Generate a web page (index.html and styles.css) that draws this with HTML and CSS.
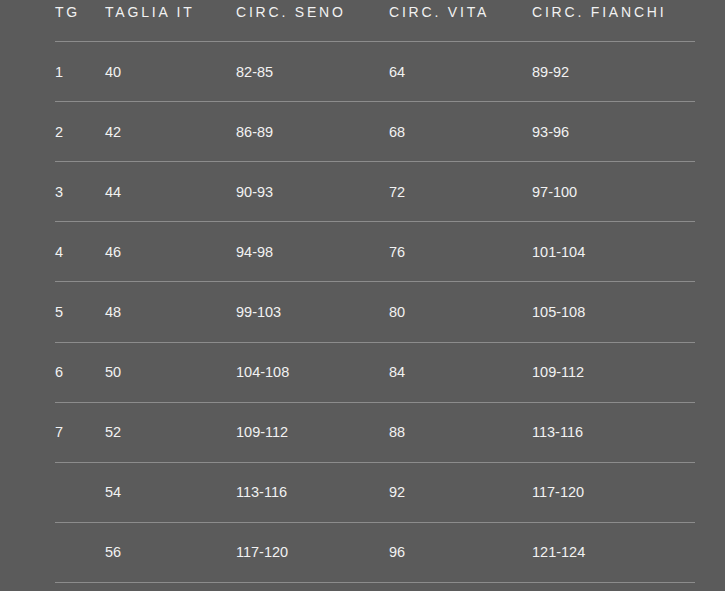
FILE: index.html
```html
<!DOCTYPE html>
<html lang="it">
<head>
<meta charset="utf-8">
<link rel="stylesheet" href="styles.css">
</head>
<body>
<table class="size-table">
  <colgroup>
    <col class="c1"><col class="c2"><col class="c3"><col class="c4"><col class="c5">
  </colgroup>
  <thead>
    <tr><th>TG</th><th>TAGLIA IT</th><th>CIRC. SENO</th><th>CIRC. VITA</th><th>CIRC. FIANCHI</th></tr>
  </thead>
  <tbody>
    <tr><td>1</td><td>40</td><td>82-85</td><td>64</td><td>89-92</td></tr>
    <tr><td>2</td><td>42</td><td>86-89</td><td>68</td><td>93-96</td></tr>
    <tr><td>3</td><td>44</td><td>90-93</td><td>72</td><td>97-100</td></tr>
    <tr><td>4</td><td>46</td><td>94-98</td><td>76</td><td>101-104</td></tr>
    <tr><td>5</td><td>48</td><td>99-103</td><td>80</td><td>105-108</td></tr>
    <tr><td>6</td><td>50</td><td>104-108</td><td>84</td><td>109-112</td></tr>
    <tr><td>7</td><td>52</td><td>109-112</td><td>88</td><td>113-116</td></tr>
    <tr><td></td><td>54</td><td>113-116</td><td>92</td><td>117-120</td></tr>
    <tr><td></td><td>56</td><td>117-120</td><td>96</td><td>121-124</td></tr>
  </tbody>
</table>
</body>
</html>
```
FILE: styles.css
```css
html, body {
  margin: 0;
  padding: 0;
  background: #5b5b5b;
  height: 100%;
}
body {
  padding-left: 55px;
  font-family: "Liberation Sans", Arial, sans-serif;
  color: #f2f2f2;
}
.size-table {
  width: 640px;
  border-collapse: collapse;
  table-layout: fixed;
}
.c1 { width: 50px; }
.c2 { width: 131px; }
.c3 { width: 153px; }
.c4 { width: 143px; }
.c5 { width: 163px; }
.size-table th {
  text-align: left;
  font-weight: 400;
  font-size: 14px;
  letter-spacing: 2.8px;
  height: 41px;
  padding: 0 0 17px 0;
  box-sizing: border-box;
  vertical-align: top;
  line-height: 24px;
  border-bottom: 1px solid #8c8c8c;
}
.size-table td {
  font-size: 14.5px;
  font-weight: 400;
  height: 59.12px;
  padding: 0;
  vertical-align: middle;
  border-bottom: 1px solid #8c8c8c;
}
```
